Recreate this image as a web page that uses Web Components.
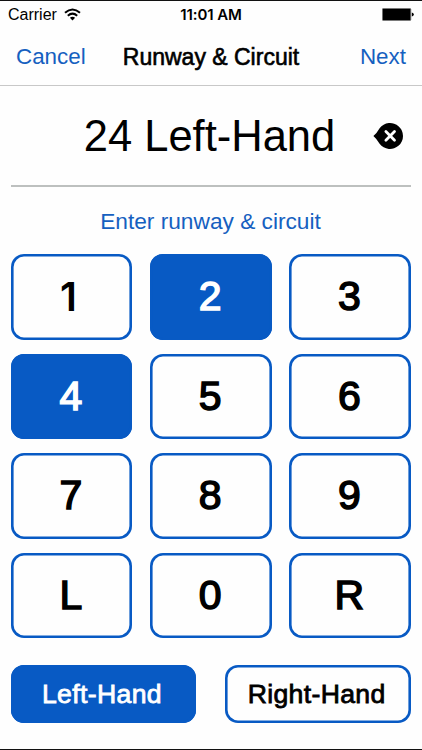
<!DOCTYPE html>
<html lang="en">
<head>
<meta charset="utf-8">
<title>Runway &amp; Circuit</title>
<style>
  body {
    margin: 0;
    background: #fefefe;
    font-family: "Liberation Sans", Arial, sans-serif;
    color: #000;
    --blue: #085ac4;
    --link: #1560c0;
  }
</style>
</head>
<body>
<runway-screen></runway-screen>

<script>
const template = (html) => {
  const t = document.createElement('template');
  t.innerHTML = html;
  return t;
};

class BaseElement extends HTMLElement {
  constructor() {
    super();
    this.attachShadow({mode: 'open'});
    this.shadowRoot.appendChild(this.constructor.template.content.cloneNode(true));
  }
}

/*
 * Carrier, time and battery
 */
class StatusBar extends BaseElement {
  static template = template(`
<style>
  :host { display: grid; grid-template-columns: 1fr auto 1fr; align-items: center; height: 28px; padding: 0 8px; font-size: 16px; line-height: 28px; }
  .carrier { display: flex; align-items: center; gap: 7px; }
  .carrier svg { margin-top: -2px; }
  .time { font-family: Inter, sans-serif; font-weight: 600; font-size: 15px; letter-spacing: -.1px; }
  .battery { justify-self: end; margin-top: -1px; }
  svg { display: block; }
</style>
<div class="carrier">Carrier
  <svg width="17" height="13" viewBox="0 0 17 13" fill="none" stroke="#000" stroke-width="2">
    <path d="M1 4.8Q8.5 -1.9 16 4.8"/>
    <path d="M3.8 7.7Q8.5 3.6 13.2 7.7"/>
    <path d="M5.9 9.8Q8.5 7.5 11.1 9.8L8.5 12.4Z" fill="#000" stroke="none"/>
  </svg>
</div>
<div class="time">11:01 AM</div>
<svg class="battery" width="32" height="13" viewBox="0 0 32 13">
  <rect x=".4" y=".4" width="28.4" height="12.2" rx="1" fill="#000" stroke="#777" stroke-width=".8"/>
  <path d="M29.8 4.6Q31.8 5 31.8 6.5T29.8 8.4Z"/>
</svg>`);
}
customElements.define('status-bar', StatusBar);

class NavBar extends BaseElement {
  static template = template(`
<style>
  :host { display: grid; grid-template-columns: 1fr auto 1fr; align-items: center; height: 56px; padding: 0 16px; border-bottom: 1px solid #c8c8c8; font-size: 22.4px; color: var(--link); }
  .title { color: #000; font-size: 23px; -webkit-text-stroke: .6px #000; }
  .right { text-align: right; }
</style>
<slot name="left"></slot>
<div class="title"><slot></slot></div>
<div class="right"><slot name="right"></slot></div>`);
}
customElements.define('nav-bar', NavBar);

class EntryField extends BaseElement {
  static template = template(`
<style>
  :host { display: flex; align-items: center; height: 101px; margin: 0 11px; border-bottom: 2px solid #bdc0bf; box-sizing: border-box; }
  .value { flex: 1; padding-left: 35px; text-align: center; font-size: 43.5px; line-height: 99px; padding-top: 1px; }
  svg { display: block; margin-right: 7px; }
</style>
<div class="value"><slot></slot></div>
<svg width="31" height="28" viewBox="0 0 31 28">
  <path d="M.4 14Q3.9 11 6.6 6.2A13 13 0 1 1 6.6 21.8Q3.9 17 .4 14Z"/>
  <path d="M12.9 9.6L21.5 18.2M21.5 9.6L12.9 18.2" stroke="#fff" stroke-width="2.8" stroke-linecap="round"/>
</svg>`);
}
customElements.define('entry-field', EntryField);

class PadKey extends BaseElement {
  static template = template(`
<style>
  :host {
    display: flex; align-items: center; justify-content: center;
    box-sizing: border-box; padding-right: 1.5px;
    border-radius: 13px; box-shadow: inset 0 0 0 2.6px var(--blue);
    font-size: var(--key-size, 41px);
    -webkit-text-stroke: var(--key-stroke, 1.5px) currentColor;
  }
  :host([selected]) { background: var(--blue); color: #fff; }
  /* plain numeral one, without a foot */
  :host([plain]) { padding-right: 6px; font-family: Inter, sans-serif; font-weight: 600; font-size: 40px; -webkit-text-stroke: 0; }
</style>
<slot></slot>`);
}
customElements.define('pad-key', PadKey);

class RunwayScreen extends BaseElement {
  static template = template(`
<style>
  :host { display: flex; flex-direction: column; height: 750px; box-sizing: border-box; border-top: 1px solid #111; border-bottom: 1px solid #111; overflow: hidden; }
  .hint { height: 67px; line-height: 68px; padding-right: 1px; text-align: center; font-size: 22.7px; color: var(--link); }
  .pad { display: grid; grid-template-columns: repeat(3, 1fr); grid-auto-rows: 85.6px; gap: 14px 17.4px; padding: 0 11px 0 10.6px; }
  .hands { display: grid; grid-template-columns: 1fr 1fr; grid-auto-rows: 58px; gap: 29px; padding: 26.4px 11px 0 10.6px; --key-size: 26.6px; --key-stroke: .8px; letter-spacing: .35px; }
  .hands pad-key { padding: 1px 3px 0 0; }
</style>
<status-bar></status-bar>
<nav-bar><span slot="left">Cancel</span>Runway &amp; Circuit<span slot="right">Next</span></nav-bar>
<entry-field>24 Left-Hand</entry-field>
<div class="hint">Enter runway &amp; circuit</div>
<div class="pad">
  <pad-key plain>1</pad-key>
  <pad-key selected>2</pad-key>
  <pad-key>3</pad-key>
  <pad-key selected>4</pad-key>
  <pad-key>5</pad-key>
  <pad-key>6</pad-key>
  <pad-key>7</pad-key>
  <pad-key>8</pad-key>
  <pad-key>9</pad-key>
  <pad-key>L</pad-key>
  <pad-key>0</pad-key>
  <pad-key>R</pad-key>
</div>
<div class="hands">
  <pad-key selected>Left-Hand</pad-key>
  <pad-key>Right-Hand</pad-key>
</div>`);
}
customElements.define('runway-screen', RunwayScreen);
</script>
</body>
</html>
